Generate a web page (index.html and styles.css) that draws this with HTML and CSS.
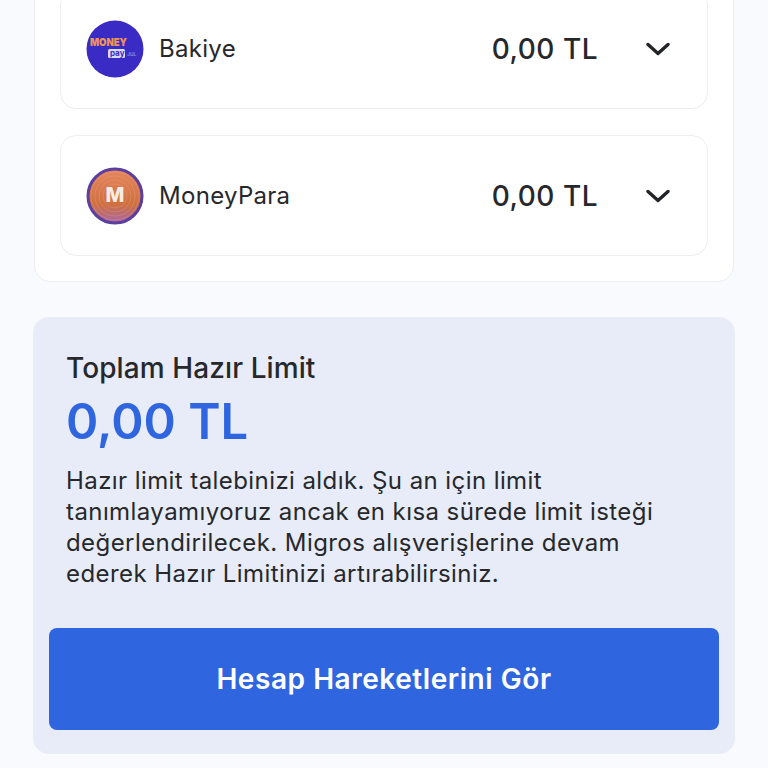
FILE: index.html
```html
<!doctype html>
<html lang="tr">
	<head>
		<meta charset="UTF-8">
		<title>Hazır Limit</title>
		<link rel="stylesheet" href="styles.css">
	</head>
	<body>
		<div class="page">
			<div class="wallet">
				<div class="row">
					<svg class="logo" viewBox="0 0 58 58">
						<circle cx="29" cy="29" r="28.5" fill="#3a2bc4"/>
						<text x="4" y="26" class="logo-money" textLength="37" lengthAdjust="spacingAndGlyphs">MONEY</text>
						<rect x="22" y="29" width="17" height="9" rx="1.5" fill="#d9dcf5"/>
						<text x="24" y="36" class="logo-pay">pay</text>
						<text x="41" y="36" class="logo-sub">JUL</text>
					</svg>
					<span class="name">Bakiye</span>
					<span class="amount">0,00 TL</span>
					<svg class="chevron" viewBox="0 0 24 14">
						<path d="M2 2.5 L12 11.5 L22 2.5" fill="none" stroke="#222428" stroke-width="3.4" stroke-linecap="round" stroke-linejoin="round"/>
					</svg>
				</div>
				<div class="row">
					<svg class="logo" viewBox="0 0 58 58">
						<defs>
							<linearGradient id="mp" x1="0" y1="0" x2="0" y2="1">
								<stop offset="0" stop-color="#e58660"/>
								<stop offset="0.65" stop-color="#d0703f"/>
								<stop offset="1" stop-color="#a866a8"/>
							</linearGradient>
						</defs>
						<circle cx="29" cy="29" r="27" fill="url(#mp)" stroke="#5b3f9e" stroke-width="3"/>
						<g fill="none" stroke="#eeb08c" stroke-width="0.6" opacity="0.45">
							<circle cx="29" cy="29" r="12"/>
							<circle cx="29" cy="29" r="16"/>
							<circle cx="29" cy="29" r="20"/>
							<circle cx="29" cy="29" r="24"/>
						</g>
						<text x="29" y="35" class="logo-m">M</text>
					</svg>
					<span class="name">MoneyPara</span>
					<span class="amount">0,00 TL</span>
					<svg class="chevron" viewBox="0 0 24 14">
						<path d="M2 2.5 L12 11.5 L22 2.5" fill="none" stroke="#222428" stroke-width="3.4" stroke-linecap="round" stroke-linejoin="round"/>
					</svg>
				</div>
			</div>
			<div class="limit">
				<h2 class="limit-title">Toplam Hazır Limit</h2>
				<div class="limit-amount">0,00 TL</div>
				<p class="limit-text">Hazır limit talebinizi aldık. Şu an için limit tanımlayamıyoruz ancak en kısa sürede limit isteği değerlendirilecek. Migros alışverişlerine devam ederek Hazır Limitinizi artırabilirsiniz.</p>
				<button class="limit-btn">Hesap Hareketlerini Gör</button>
			</div>
		</div>
	</body>
</html>
```

FILE: styles.css
```css
*{margin:0;padding:0;box-sizing:border-box;}
body{
	background:#f9fafe;
	font-family:"Inter","Liberation Sans",sans-serif;
	color:#26282c;
	overflow:hidden;
}
.page{
	width:702px;
	margin:-38px 0 0 33px;
}
.wallet{
	margin:0 1px;
	padding:25px;
	background:#fff;
	border:1px solid #eceef1;
	border-radius:16px;
	display:flex;
	flex-direction:column;
	gap:26px;
}
.row{
	height:121px;
	padding:0 37px 0 25px;
	border:1px solid #eceef1;
	border-radius:16px;
	display:flex;
	align-items:center;
}
.logo{
	width:58px;height:58px;
	flex:none;
}
.logo-money{
	font:900 11px "Inter",sans-serif;
	fill:#f0935a;
}
.logo-pay{
	font:700 8px "Inter",sans-serif;
	fill:#3a2bc4;
}
.logo-sub{
	font:600 5px "Inter",sans-serif;
	fill:#8f90e0;
}
.logo-m{
	font:800 20px "Inter",sans-serif;
	fill:#f6ece6;
	text-anchor:middle;
}
.name{
	margin-left:15px;
	font-size:24px;
	letter-spacing:0.3px;
	flex:1;
}
.amount{
	font-size:28px;
	letter-spacing:0.5px;
	font-weight:500;
}
.chevron{
	width:24px;height:14px;
	margin-left:48px;
	flex:none;
}
.limit{
	margin-top:35px;
	padding:32px 16px 24px;
	background:#e7ecf8;
	border-radius:16px;
}
.limit-title{
	margin-left:17px;
	font-size:28px;
	letter-spacing:0.1px;
	line-height:38px;
	font-weight:500;
}
.limit-amount{
	margin-left:17px;
	font-size:49px;
	line-height:70px;
	font-weight:600;
	color:#2f66e0;
}
.limit-text{
	margin:8px 40px 0 17px;
	font-size:24px;
	letter-spacing:0.42px;
	line-height:31px;
}
.limit-btn{
	display:block;
	width:100%;height:102px;
	margin-top:39px;
	background:#2f66e0;
	border:0;
	border-radius:8px;
	color:#fff;
	font-family:inherit;
	font-size:28px;
	letter-spacing:0.55px;
	font-weight:600;
}
```
